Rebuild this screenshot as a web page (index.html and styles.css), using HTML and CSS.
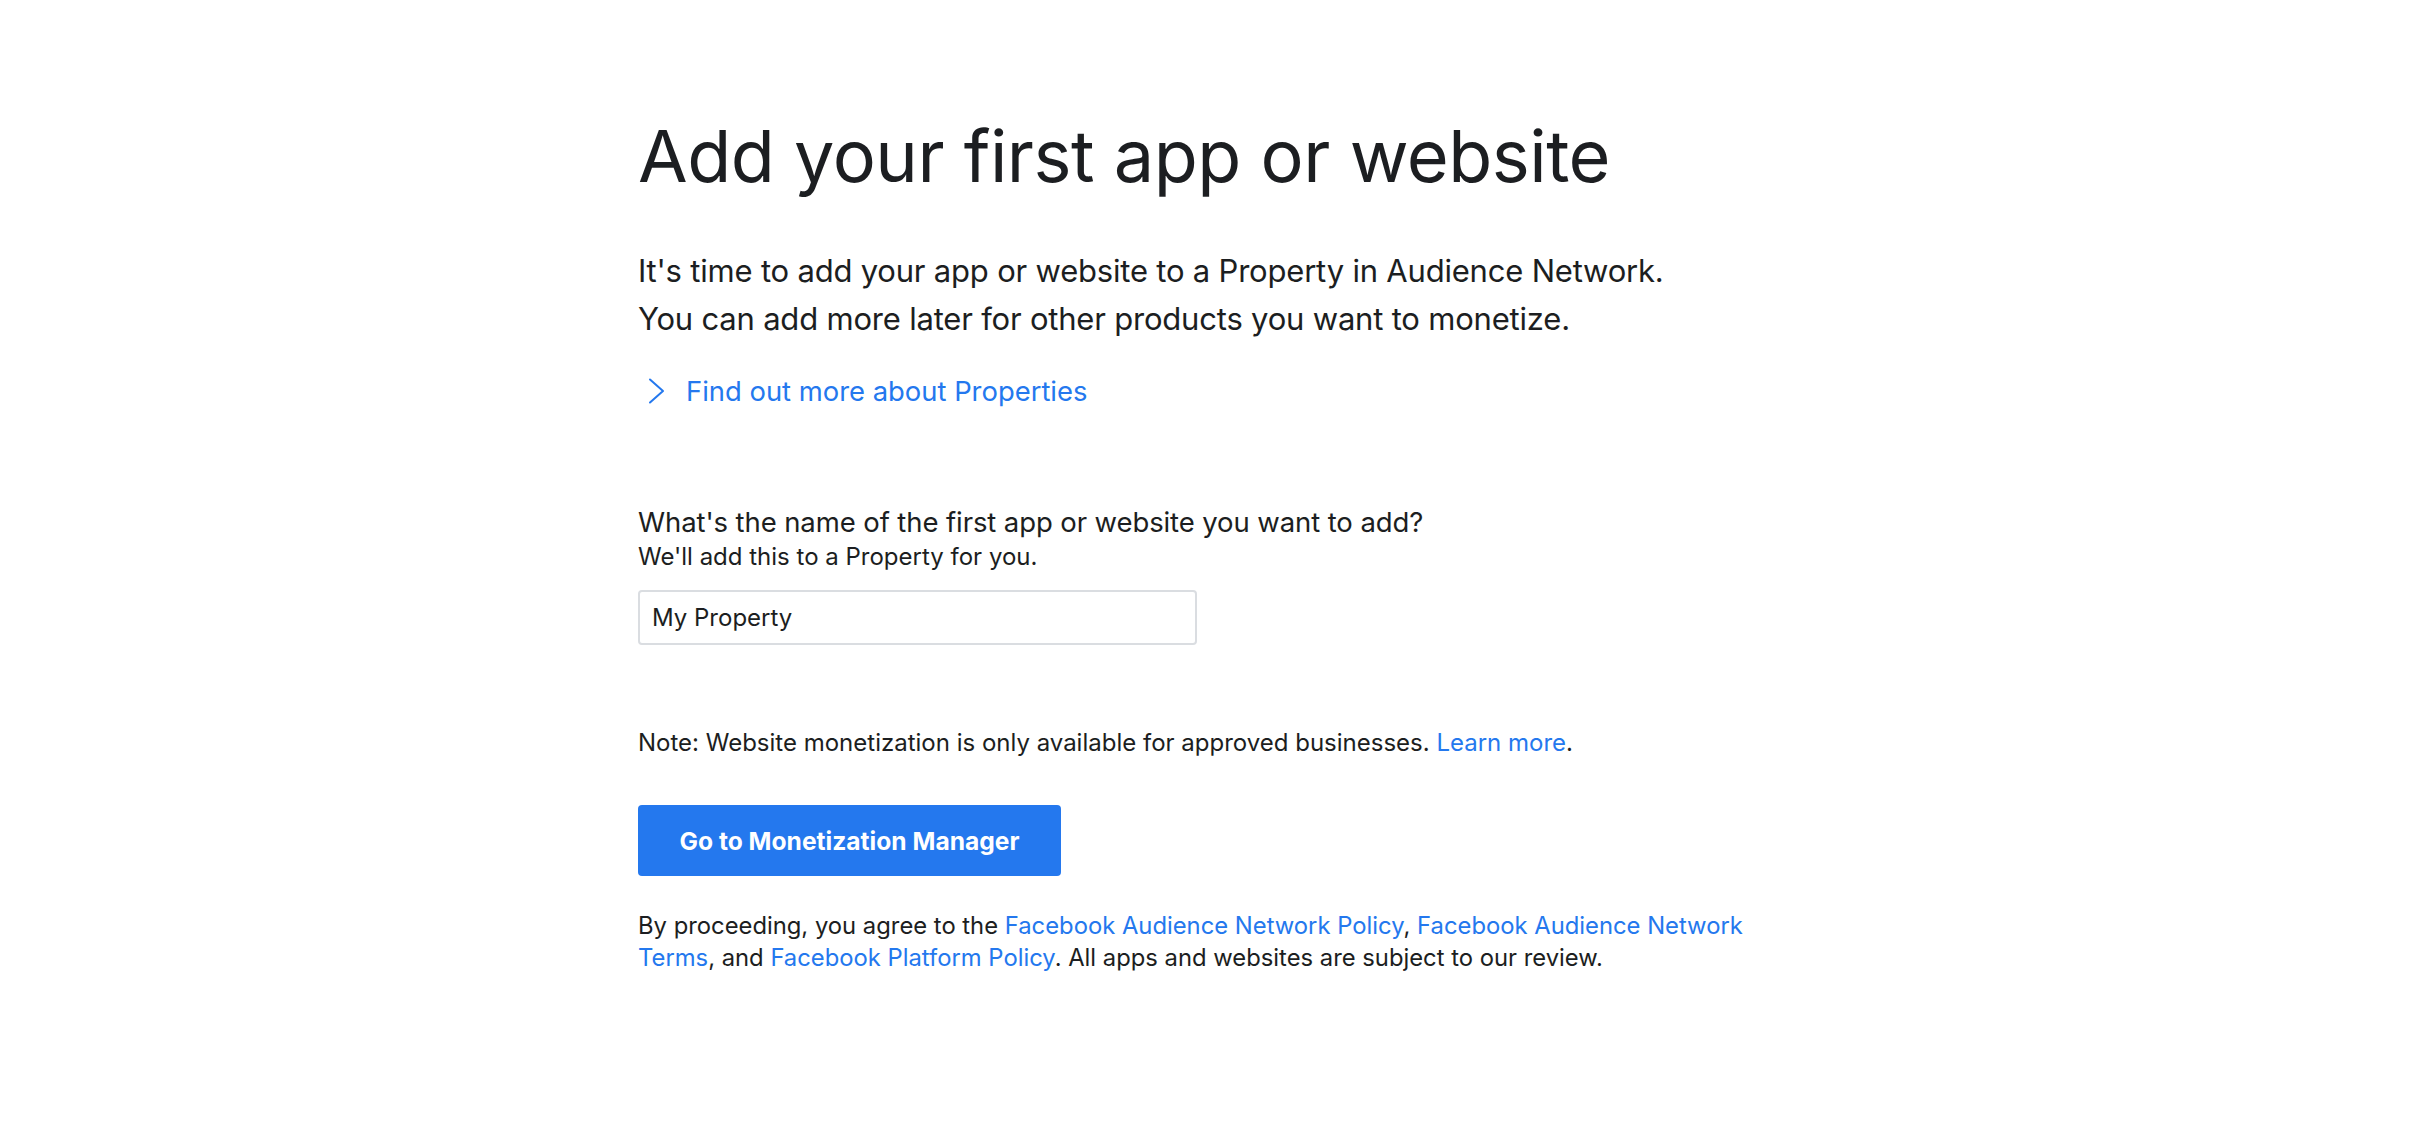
FILE: index.html
```html
<!DOCTYPE html>
<html lang="en">
<head>
<meta charset="utf-8">
<title>Add your first app or website</title>
<link rel="stylesheet" href="styles.css">
</head>
<body>
<main class="page">
  <section class="content">
    <h1 class="title">Add your first app or website</h1>
    <p class="intro">It's time to add your app or website to a Property in Audience Network.<br>You can add more later for other products you want to monetize.</p>
    <a class="more" href="#">
      <svg class="chev" viewBox="0 0 18 26" width="18" height="26" aria-hidden="true"><path d="M2 1.5 L15 13 L2 24.5" fill="none" stroke="currentColor" stroke-width="2" stroke-linecap="round" stroke-linejoin="round"/></svg>
      <span>Find out more about Properties</span>
    </a>
    <div class="field">
      <label class="q" for="name">What's the name of the first app or website you want to add?</label>
      <div class="hint">We'll add this to a Property for you.</div>
      <input id="name" class="input" type="text" value="My Property">
    </div>
    <p class="note">Note: Website monetization is only available for approved businesses. <a href="#">Learn more</a>.</p>
    <button class="btn" type="button">Go to Monetization Manager</button>
    <p class="legal">By proceeding, you agree to the <a href="#">Facebook Audience Network Policy</a>, <a href="#"><span>Facebook Audience Network</span> <span>Terms</span></a>, and <a href="#">Facebook Platform Policy</a>. All apps and websites are subject to our review.</p>
  </section>
</main>
</body>
</html>
```
FILE: styles.css
```css
html, body {
  margin: 0;
  padding: 0;
  background: #ffffff;
}
body {
  font-family: Inter, "Liberation Sans", Arial, sans-serif;
  color: #1c1e21;
}
.page {
  display: flex;
  justify-content: flex-start;
  padding-left: 638px;
}
.content {
  width: 1120px;
  display: flex;
  flex-direction: column;
  align-items: flex-start;
}
.title {
  margin: 110px 0 0;
  font-size: 72px;
  font-weight: 400;
  line-height: 92px;
  letter-spacing: -0.5px;
}
.intro {
  margin: 45px 0 0;
  font-size: 31px;
  line-height: 48px;
  letter-spacing: -0.2px;
}
a {
  color: #2478ee;
  text-decoration: none;
}
.more {
  margin-top: 28px;
  display: flex;
  align-items: center;
  gap: 20px;
  font-size: 27.4px;
  line-height: 40px;
  padding-left: 10px;
}
.chev {
  display: block;
}
.field {
  margin-top: 92px;
  display: flex;
  flex-direction: column;
  align-items: flex-start;
}
.q {
  font-size: 27.5px;
  line-height: 38px;
  letter-spacing: -0.1px;
}
.hint {
  font-size: 24px;
  line-height: 32px;
  margin-top: 0;
}
.input {
  margin-top: 17px;
  width: 559px;
  height: 55px;
  box-sizing: border-box;
  border: 2px solid #dadde1;
  border-radius: 4px;
  padding: 0 12px;
  font-family: inherit;
  font-size: 24px;
  color: #1c1e21;
  outline: none;
}
.note {
  margin: 82px 0 0;
  font-size: 24px;
  line-height: 32px;
}
.btn {
  margin-top: 46px;
  width: 423px;
  height: 71px;
  border: none;
  border-radius: 4px;
  background: #2478ee;
  color: #ffffff;
  font-family: inherit;
  font-size: 24.6px;
  font-weight: 700;
  cursor: pointer;
}
.legal {
  margin: 34px 0 0;
  font-size: 23.8px;
  line-height: 32px;
  max-width: 1120px;
}
```
